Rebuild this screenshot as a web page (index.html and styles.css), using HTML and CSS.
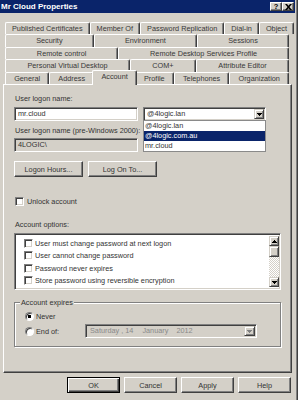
FILE: index.html
```html
<!DOCTYPE html>
<html>
<head>
<meta charset="utf-8">
<title>Mr Cloud Properties</title>
<link rel="stylesheet" href="styles.css">
</head>
<body>
<div class="window">
  <div class="titlebar">
    <span class="title">Mr Cloud Properties</span>
    <div class="tb-buttons">
      <span class="tb-btn help">?</span>
      <span class="tb-btn close"><svg width="7" height="6" viewBox="0 0 7 6"><path d="M0 0H2L3.5 1.8L5 0H7L4.5 3L7 6H5L3.5 4.2L2 6H0L2.5 3Z" fill="#000"/></svg></span>
    </div>
  </div>

  <div class="tabs">
    <div class="tabrow r1">
      <span class="tab">Published Certificates</span><span class="tab">Member Of</span><span class="tab">Password Replication</span><span class="tab">Dial-in</span><span class="tab">Object</span>
    </div>
    <div class="tabrow r2">
      <span class="tab">Security</span><span class="tab">Environment</span><span class="tab">Sessions</span>
    </div>
    <div class="tabrow r3">
      <span class="tab">Remote control</span><span class="tab">Remote Desktop Services Profile</span>
    </div>
    <div class="tabrow r4">
      <span class="tab">Personal Virtual Desktop</span><span class="tab">COM+</span><span class="tab">Attribute Editor</span>
    </div>
    <div class="tabrow r5">
      <span class="tab">General</span><span class="tab">Address</span><span class="tab active">Account</span><span class="tab">Profile</span><span class="tab">Telephones</span><span class="tab">Organization</span>
    </div>
  </div>

  <div class="panel">
    <div class="label">User logon name:</div>
    <div class="logon-row">
      <div class="field text-input">mr.cloud</div>
      <div class="combo">
        <div class="field combo-box">
          <span class="combo-text">@4logic.lan</span>
          <span class="sbtn"><svg width="5" height="3" viewBox="0 0 5 3"><path d="M0 0H5V1H4V2H3V3H2V2H1V1H0Z" fill="#000"/></svg></span>
        </div>
        <ul class="combo-list">
          <li>@4logic.lan</li>
          <li class="sel">@4logic.com.au</li>
          <li>mr.cloud</li>
        </ul>
      </div>
    </div>
    <div class="label l2">User logon name (pre-Windows 2000):</div>
    <div class="field text-input disabled">4LOGIC\</div>
    <div class="btn-row">
      <span class="btn wide">Logon Hours...</span>
      <span class="btn wide">Log On To...</span>
    </div>
    <div class="check-row"><span class="check"></span><span>Unlock account</span></div>
    <div class="label l3">Account options:</div>
    <div class="listbox">
      <div class="items">
        <div class="item"><span class="check"></span><span>User must change password at next logon</span></div>
        <div class="item"><span class="check"></span><span>User cannot change password</span></div>
        <div class="item"><span class="check"></span><span>Password never expires</span></div>
        <div class="item"><span class="check"></span><span>Store password using reversible encryption</span></div>
      </div>
      <div class="scrollbar">
        <span class="sbtn"><svg width="5" height="3" viewBox="0 0 5 3"><path d="M2 0H3V1H4V2H5V3H0V2H1V1H2Z" fill="#000"/></svg></span>
        <span class="thumb"></span>
        <span class="track"></span>
        <span class="sbtn"><svg width="5" height="3" viewBox="0 0 5 3"><path d="M0 0H5V1H4V2H3V3H2V2H1V1H0Z" fill="#000"/></svg></span>
      </div>
    </div>
    <fieldset class="group">
      <legend>Account expires</legend>
      <div class="radio-row"><span class="radio on"></span><span class="radio-label">Never</span></div>
      <div class="radio-row end"><span class="radio"></span><span class="radio-label end-label">End of:</span>
        <div class="field date">
          <span class="date-text">Saturday , 14</span><span class="date-month">January</span><span class="date-year">2012</span>
          <span class="sbtn dis"><svg width="5" height="3" viewBox="0 0 5 3"><path d="M0 0H5V1H4V2H3V3H2V2H1V1H0Z" fill="#808080"/></svg></span>
        </div>
      </div>
    </fieldset>
  </div>

  <div class="dialog-buttons">
    <span class="btn default">OK</span>
    <span class="btn">Cancel</span>
    <span class="btn">Apply</span>
    <span class="btn">Help</span>
  </div>
</div>
</body>
</html>
```

FILE: styles.css
```css
* { box-sizing: border-box; }
html, body { margin: 0; padding: 0; }
body {
  width: 298px;
  height: 400px;
  overflow: hidden;
  background: #d4d0c8;
  font-family: "Liberation Sans", Arial, sans-serif;
  font-size: 7.3px;
  color: #333;
}
.window {
  width: 298px;
  height: 400px;
  background: #d4d0c8;
  padding-right: 3px;
  box-shadow: inset -1px 0 #404040, inset -2px 0 #808080;
}
.titlebar {
  height: 13px;
  background: #0a246a;
  display: flex;
  align-items: center;
  justify-content: space-between;
  padding: 0 1px 0 1px;
}
.title {
  color: #fff;
  font-weight: bold;
  font-size: 8px;
  line-height: 13px;
}
.tb-buttons { display: flex; }
.tb-btn {
  width: 12px;
  height: 9px;
  background: #d4d0c8;
  border: 1px solid;
  border-color: #fff #404040 #404040 #fff;
  box-shadow: inset -1px -1px #808080;
  display: flex;
  align-items: center;
  justify-content: center;
  font-weight: bold;
  font-size: 7.5px;
  line-height: 1;
  color: #000;
}

/* tabs */
.tabs { margin: 9px 6px 0 5px; }
.tabrow { display: flex; height: 12px; }
.r2, .r4 { height: 13px; }
.tab {
  flex: 1 1 auto;
  height: 100%;
  padding: 0 6px;
  text-align: center;
  white-space: nowrap;
  background: #d4d0c8;
  border-top: 1px solid #fff;
  border-left: 1px solid #fff;
  border-right: 1px solid #404040;
  box-shadow: inset -1px 0 #808080;
  border-radius: 2px 2px 0 0;
  line-height: 11px;
  color: #383838;
}
.r2 .tab, .r4 .tab { line-height: 12px; }
.tab.active {
  position: relative;
  z-index: 1;
  height: 15px;
  margin: -2px -2px 0;
  line-height: 12px;
}

/* panel */
.panel {
  margin: 0 3px;
  height: 289px;
  border: 1px solid;
  border-color: #fff #404040 #404040 #fff;
  box-shadow: inset -1px -1px #808080;
  padding: 9px 10px 0 10px;
}
.label { line-height: 9px; padding-left: 1px; }
.l2 { margin-top: 5px; }
.l3 { margin-top: 14px; }
.field {
  height: 14px;
  background: #fff;
  border: 1px solid;
  border-color: #808080 #fff #fff #808080;
  box-shadow: inset 1px 1px #404040, inset -1px -1px #d4d0c8;
  line-height: 12px;
  padding: 0 3px;
  white-space: nowrap;
  color: #333;
}
.logon-row { display: flex; gap: 5px; margin-top: 4px; }
.text-input { width: 124px; }
.text-input.disabled { background: #d4d0c8; margin-top: 3px; }
.combo { position: relative; width: 123px; }
.combo-box { display: flex; align-items: center; padding: 0 1px 0 3px; }
.combo-text { flex: 1; }
.sbtn {
  width: 10px;
  height: 10px;
  flex: none;
  background: #d4d0c8;
  border: 1px solid;
  border-color: #d4d0c8 #404040 #404040 #d4d0c8;
  box-shadow: inset 1px 1px #fff, inset -1px -1px #808080;
  display: flex;
  align-items: center;
  justify-content: center;
}
.combo-list {
  position: absolute;
  z-index: 2;
  top: calc(100% - 1px);
  left: 0;
  width: 123px;
  margin: 0;
  padding: 0;
  list-style: none;
  background: #fff;
  border: 1px solid #8a8a8a;
}
.combo-list li { height: 10px; line-height: 10px; padding-left: 1px; }
.combo-list li.sel { background: #0a246a; color: #fff; }

.btn-row { display: flex; gap: 5px; margin-top: 9px; }
.btn {
  height: 16px;
  width: 53px;
  display: flex;
  align-items: center;
  justify-content: center;
  background: #d4d0c8;
  border: 1px solid;
  border-color: #fff #404040 #404040 #fff;
  box-shadow: inset -1px -1px #808080;
  color: #333;
  white-space: nowrap;
}
.btn.wide { width: 69px; }
.btn.default {
  border-color: #000;
  box-shadow: inset 1px 1px #fff, inset -1px -1px #404040, inset -2px -2px #808080;
}

.check {
  width: 9px;
  height: 9px;
  flex: none;
  background: #fff;
  border: 1px solid;
  border-color: #808080 #fff #fff #808080;
  box-shadow: inset 1px 1px #404040, inset -1px -1px #d4d0c8;
}
.check-row {
  display: flex;
  align-items: center;
  gap: 3px;
  height: 10px;
  margin-top: 19px;
  padding-left: 1px;
}

.listbox {
  height: 57px;
  margin-top: 4px;
  display: flex;
  background: #fff;
  border: 1px solid;
  border-color: #808080 #fff #fff #808080;
  box-shadow: inset 1px 1px #404040, inset -1px -1px #d4d0c8;
  padding: 2px 1px 2px 2px;
}
.items { flex: 1; padding: 1px 0 0 7px; }
.item { height: 12.5px; display: flex; align-items: center; gap: 2px; white-space: nowrap; }
.scrollbar { width: 10px; display: flex; flex-direction: column; }
.scrollbar .sbtn { width: 10px; height: 10px; }
.thumb {
  height: 11px;
  background: #d4d0c8;
  border: 1px solid;
  border-color: #d4d0c8 #404040 #404040 #d4d0c8;
  box-shadow: inset 1px 1px #fff, inset -1px -1px #808080;
}
.track {
  flex: 1;
  background: repeating-conic-gradient(#fff 0 25%, #d4d0c8 0 50%) 0 0 / 2px 2px;
}

.group {
  margin: 8px 0 0;
  padding: 3px 8px 8px 4px;
  min-width: 0;
  border: 1px solid #808080;
  box-shadow: inset 1px 1px #fff, 1px 1px #fff;
}
.group legend {
  padding: 0 1px;
  margin-left: 1px;
  line-height: 9px;
  background: #d4d0c8;
}
.radio-row {
  display: flex;
  align-items: center;
  height: 12px;
  padding-left: 6px;
}
.radio-row.end { height: 14px; margin-top: 2px; }
.radio {
  width: 9px;
  height: 9px;
  flex: none;
  border-radius: 50%;
  background: #fff;
  border: 1px solid;
  border-color: #808080 #fff #fff #808080;
  box-shadow: inset 1px 1px #404040;
}
.radio.on { background: radial-gradient(circle, #000 0 1.6px, #fff 2px); }
.radio-label { margin-left: 2px; }
.end-label { width: 49px; }
.date {
  width: 172px;
  display: flex;
  align-items: center;
  background: #d4d0c8;
  color: #8a8a8a;
  padding: 0 1px 0 4px;
}
.date-month { margin-left: 9px; }
.date-year { margin-left: 8px; flex: 1; }
.sbtn.dis { width: 11px; }

.dialog-buttons {
  display: flex;
  justify-content: flex-end;
  gap: 4px;
  margin-top: 4px;
  padding-right: 4px;
}
```
